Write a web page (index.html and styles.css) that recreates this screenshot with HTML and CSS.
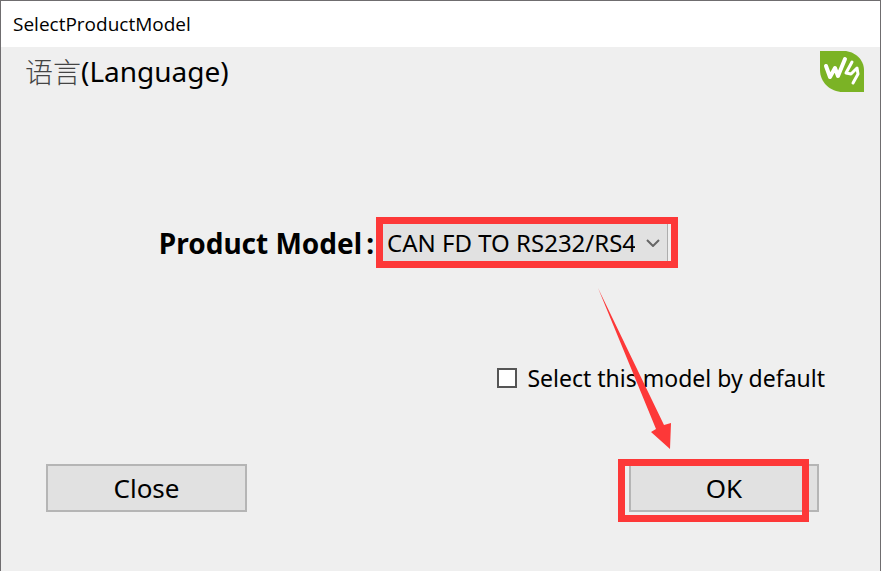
FILE: index.html
```
<!DOCTYPE html>
<html lang="en">
<head>
    <meta charset="utf-8" />
    <title>SelectProductModel</title>
    <link rel="stylesheet" href="styles.css">
</head>
<body>
<div class="dialog">
    <header class="titlebar">SelectProductModel</header>
    <form class="content">
        <div class="top">
            <button type="button" class="language"><span class="cjk" lang="zh">语言</span>(Language)</button>
            <svg class="logo" viewBox="0 0 46 44" role="img" aria-label="WS">
                <path fill="#7bb325" d="M1 1h24c11 0 20 9 20 19v22H24C11 42 1 32 1 20z"/>
                <path fill="none" stroke="#fff" stroke-width="4" stroke-linecap="round" stroke-linejoin="round" d="M7 16l4 11 5-9 3 8 7-17"/>
                <path fill="none" stroke="#fff" stroke-width="3" stroke-linecap="round" stroke-linejoin="round" d="M33 12l-6 11 5 1 6-6 1 6-5 9"/>
            </svg>
        </div>

        <div class="model">
            <label for="model">Product Model<span class="colon">:</span></label>
            <div class="mark mark-model">
                <select id="model">
                    <option>CAN FD TO RS232/RS485</option>
                </select>
                <svg class="chevron" viewBox="0 0 14 8"><path d="M1 1l6 6 6-6"/></svg>
            </div>
        </div>

        <div class="default">
            <input type="checkbox" id="default">
            <label for="default">Select this model by default</label>
            <svg class="arrow" viewBox="0 0 74 162">
                <path fill="#fd3838" d="M0 0L66 137l7-2-1 26-19-17 5-3z"/>
            </svg>
        </div>

        <div class="buttons">
            <button type="button" class="btn">Close</button>
            <div class="mark mark-ok">
                <button type="submit" class="btn">OK</button>
            </div>
        </div>
    </form>
</div>
</body>
</html>
```
FILE: styles.css
```
* {
    box-sizing: border-box;
}
body {
    margin: 0;
    font-family: "Noto Sans", "Noto Sans CJK SC", sans-serif;
    font-size: 24px;
    color: #000;
}
button, select {
    font: inherit;
    color: inherit;
}
.dialog {
    display: flex;
    flex-direction: column;
    min-height: 100vh;
    border: 1px solid #6f6d6f;
    border-bottom: 0;
    background: #efefef;
}
.titlebar {
    padding: 0 12px;
    background: #fff;
    font-family: "Open Sans", sans-serif;
    font-size: 19px;
    line-height: 46px;
}
.content {
    padding: 0 15px 0 24px;
}
.top {
    display: flex;
    justify-content: space-between;
    padding-top: 3px;
}
.language {
    display: flex;
    border: 0;
    padding: 0;
    background: none;
    font-size: 28px;
    line-height: 42px;
}
.language .cjk {
    font-family: "Noto Sans CJK SC", sans-serif;
    font-weight: 300;
    color: #444;
}
.logo {
    width: 46px;
    height: 44px;
}

/* product model */
.model {
    display: flex;
    justify-content: flex-end;
    align-items: center;
    margin-top: 123px;
    padding-right: 187px;
}
.model label {
    margin-right: 2px;
    font-size: 28px;
    font-weight: bold;
    line-height: 44px;
    white-space: nowrap;
}
.colon {
    margin-left: 4px;
}
.mark {
    position: relative;
}
.mark::after {
    content: "";
    position: absolute;
    border: 7px solid #fd3838;
    pointer-events: none;
}
.mark-model {
    width: 302px;
    padding: 6px 10px 6px 6px;
}
.mark-model::after {
    inset: 0;
}
.mark-model select {
    display: block;
    width: 100%;
    height: 39px;
    padding: 0 32px 0 4px;
    border: 1px solid #adadad;
    border-radius: 0;
    background: #e1e1e1;
    appearance: none;
    text-overflow: clip;
}
.chevron {
    position: absolute;
    top: 22px;
    right: 18px;
    width: 14px;
    height: 8px;
    fill: none;
    stroke: #666;
    stroke-width: 2;
    pointer-events: none;
}

/* default tick box */
.default {
    position: relative;
    display: flex;
    justify-content: flex-end;
    align-items: center;
    gap: 10px;
    margin-top: 92px;
    padding-right: 40px;
    font-size: 23px;
    line-height: 36px;
}
.default input {
    width: 20px;
    height: 20px;
    margin: 0;
    border: 2px solid #555;
    background: #fff;
    appearance: none;
}
.default input:checked {
    background: #444;
    box-shadow: inset 0 0 0 3px #fff;
}
.arrow {
    position: absolute;
    right: 193px;
    bottom: -54px;
    width: 74px;
    height: 162px;
    pointer-events: none;
}

/* buttons */
.buttons {
    display: flex;
    justify-content: space-between;
    margin-top: 68px;
    padding: 0 46px 0 21px;
}
.btn {
    display: block;
    width: 201px;
    height: 48px;
    padding: 0;
    border: 2px solid #b5b5b5;
    background: #e1e1e1;
    font-size: 26px;
}
.mark-ok .btn {
    width: 190px;
}
.mark-ok::after {
    inset: -5px 10px -10px -11px;
}
```
